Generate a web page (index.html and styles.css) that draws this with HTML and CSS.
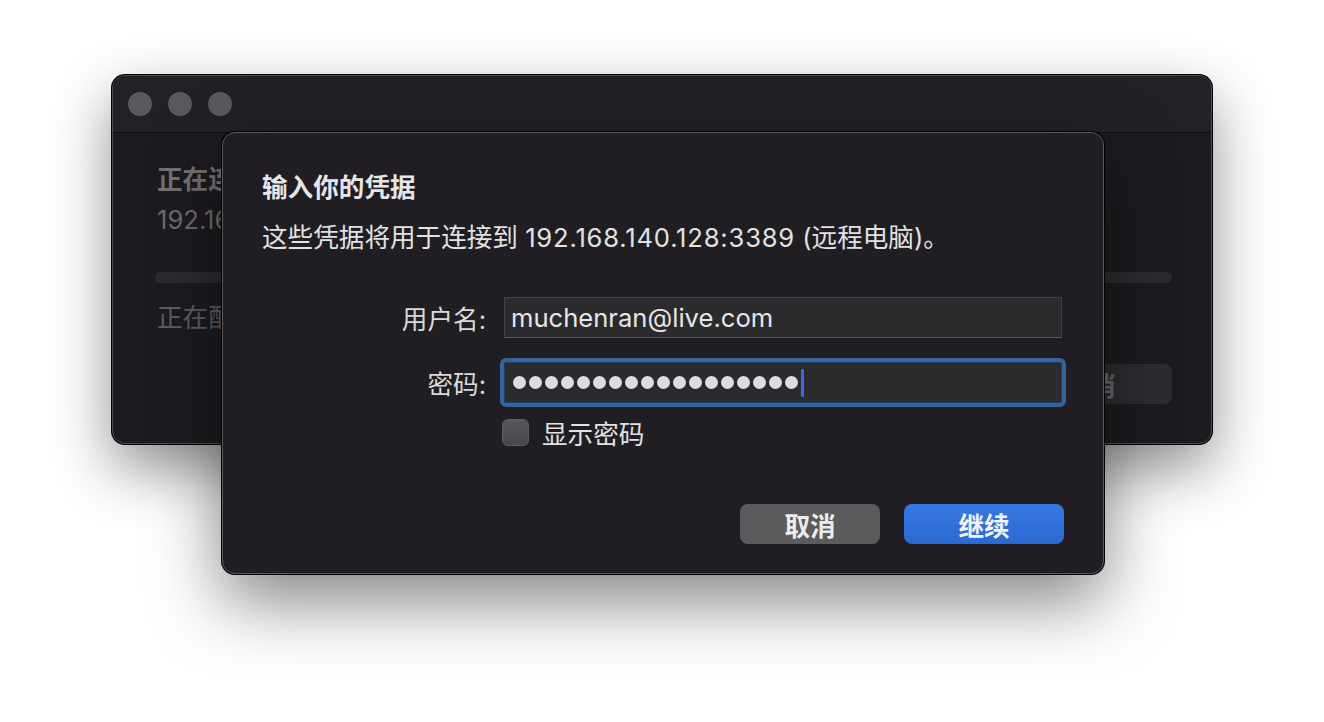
FILE: index.html
```html
<!DOCTYPE html>
<html>
<head>
    <meta charset="UTF-8">
    <link rel="stylesheet" href="styles.css">
</head>
<body>
    <div class="desktop">
        <div class="window back-window">
            <div class="titlebar">
                <span class="light"></span>
                <span class="light"></span>
                <span class="light"></span>
            </div>
            <div class="back-body">
                <div class="back-title">正在连接</div>
                <div class="back-line">192.168</div>
                <div class="progress"></div>
                <div class="back-line status">正在配置</div>
                <div class="back-actions">
                    <div class="btn back-btn">取消</div>
                </div>
            </div>
        </div>

        <div class="window dialog">
            <h1 class="dialog-title">输入你的凭据</h1>
            <p class="dialog-text">这些凭据将用于连接到 <span class="num">192.168.140.128:3389</span> (远程电脑)。</p>

            <div class="form">
                <label class="field-label">用户名:</label>
                <div class="field">muchenran@live.com</div>

                <label class="field-label">密码:</label>
                <div class="field focused">
                    <span class="dots">
                        <i></i><i></i><i></i><i></i><i></i><i></i>
                        <i></i><i></i><i></i><i></i><i></i><i></i>
                        <i></i><i></i><i></i><i></i><i></i><i></i>
                    </span>
                    <span class="caret"></span>
                </div>

                <div></div>
                <div class="check-row">
                    <span class="checkbox"></span>
                    <span>显示密码</span>
                </div>
            </div>

            <div class="actions">
                <div class="btn btn-cancel">取消</div>
                <div class="btn btn-primary">继续</div>
            </div>
        </div>
    </div>
</body>
</html>
```

FILE: styles.css
```css
body {
    margin: 0;
    background: #ffffff;
    font-family: Inter, "Noto Sans CJK SC", sans-serif;
    overflow: hidden;
}

.desktop {
    position: relative;
    width: 1324px;
    height: 722px;
}

.window {
    position: absolute;
    box-sizing: border-box;
    border-radius: 13px;
}

/* window behind the sheet */
.back-window {
    left: 112px;
    top: 75px;
    width: 1100px;
    height: 369px;
    background: #1d1b1f;
    border: 1px solid #4d4c50;
    box-shadow: 0 0 0 1px #000, 0 24px 60px rgba(0, 0, 0, 0.45);
    display: flex;
    flex-direction: column;
}

.titlebar {
    height: 56px;
    display: flex;
    align-items: center;
    gap: 16px;
    padding-left: 15px;
    background: #232125;
    border-bottom: 1px solid #0c0b0d;
    border-radius: 12px 12px 0 0;
    flex-shrink: 0;
}

.light {
    width: 24px;
    height: 24px;
    border-radius: 50%;
    background: #5a595d;
}

.back-body {
    flex: 1;
    padding: 30px 39px 0 44px;
    color: #6d6c70;
    font-size: 25.6px;
}

.back-title {
    line-height: 34px;
    font-weight: 700;
    color: #727174;
}

.back-line {
    line-height: 34px;
    margin-top: 6px;
}

.progress {
    height: 11px;
    margin: 35px 0 0 -2px;
    border-radius: 6px;
    background: #2d2b2f;
}

.status {
    margin-top: 18px;
    color: #5f5e62;
}

.back-actions {
    display: flex;
    justify-content: flex-end;
    margin-top: 29px;
}

.back-btn {
    width: 164px;
    background: #2e2c30;
    color: #6a696c;
}

/* credentials sheet */
.dialog {
    left: 222px;
    top: 132px;
    width: 882px;
    height: 442px;
    background: #201e22;
    border: 1px solid #59585c;
    box-shadow: 0 0 0 1px #000, 0 26px 70px rgba(0, 0, 0, 0.5);
    padding: 38px 39px 29px 39px;
    display: flex;
    flex-direction: column;
    color: #e3e3e5;
}

.dialog-title {
    margin: 0;
    font-size: 25.6px;
    line-height: 34px;
    font-weight: 700;
    color: #e6e6e8;
}

.dialog-text {
    margin: 16px 0 0;
    font-size: 25.6px;
    line-height: 34px;
    color: #e2e2e4;
}

.num {
    letter-spacing: 0.8px;
}

.form {
    display: grid;
    grid-template-columns: 224px 558px;
    column-gap: 18px;
    row-gap: 24px;
    align-items: center;
    margin-top: 42px;
}

.field-label {
    text-align: right;
    font-size: 25.6px;
    color: #dadadc;
}

.field {
    box-sizing: border-box;
    height: 41px;
    display: flex;
    align-items: center;
    padding: 0 6px;
    background: #2b2a2d;
    border: 1px solid #414043;
    border-bottom-color: #58575a;
    font-size: 25.6px;
    color: #e6e6e8;
}

.field.focused {
    border-color: #1f3e63;
    outline: 4px solid #33649b;
    border-radius: 2px;
    padding-left: 8px;
}

.dots {
    display: flex;
    gap: 3px;
}

.dots i {
    width: 13px;
    height: 13px;
    border-radius: 50%;
    background: #dedde2;
}

.caret {
    width: 3px;
    height: 28px;
    margin-left: 3px;
    border-radius: 1px;
    background: #2e6cf2;
}

.check-row {
    display: flex;
    align-items: center;
    gap: 13px;
    margin: -13px 0 0 -2px;
    font-size: 25.6px;
    color: #e2e2e4;
}

.checkbox {
    width: 27px;
    height: 27px;
    box-sizing: border-box;
    border-radius: 6px;
    border: 1px solid #5e5d61;
    background: linear-gradient(#58575b, #48474b);
}

.actions {
    margin-top: auto;
    display: flex;
    justify-content: flex-end;
    gap: 24px;
}

.btn {
    height: 40px;
    border-radius: 8px;
    display: flex;
    align-items: center;
    justify-content: center;
    font-size: 25.6px;
    font-weight: 600;
    box-sizing: border-box;
}

.btn-cancel {
    width: 140px;
    background: #5b5a5d;
    color: #ececee;
}

.btn-primary {
    width: 160px;
    background: linear-gradient(#3579e2, #2b68d2);
    color: #f2f4f8;
}
```
